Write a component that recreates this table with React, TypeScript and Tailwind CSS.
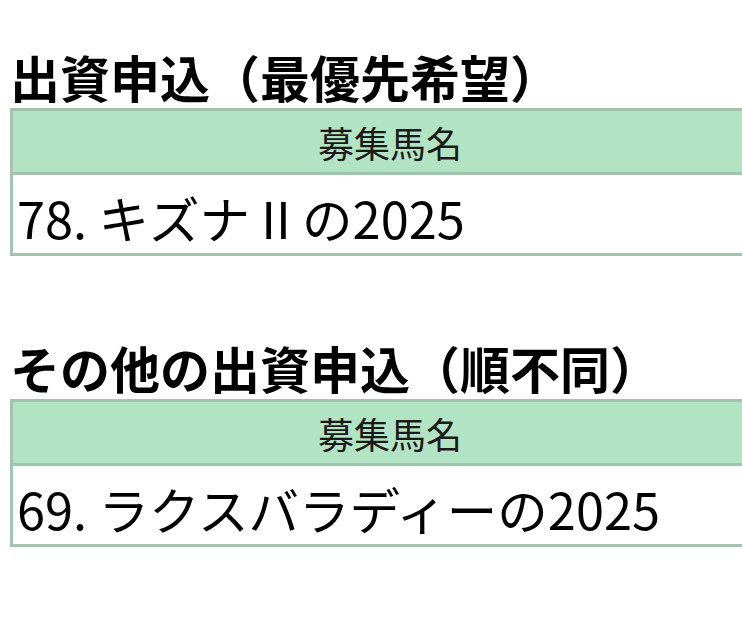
import React from "react";

const FONT = { fontFamily: '"Noto Sans CJK JP", "Noto Sans", sans-serif' };

function Section({ title, horse }: { title: string; horse: string }) {
  return (
    <section>
      <h2 className="text-[50px] leading-[50px] font-bold text-black">{title}</h2>
      <div className="mt-[7px] w-[760px] border-[3px] border-[#a4c3af]">
        <div className="h-[64px] bg-[#b2e3c3] flex items-center justify-center text-[36px] text-[#1a1a1a] border-b-[3px] border-[#a4c3af]">
          募集馬名
        </div>
        <div className="h-[78px] bg-white flex items-center pl-[4px] pt-[7px] text-[50.5px] text-black whitespace-nowrap">
          {horse}
        </div>
      </div>
    </section>
  );
}

export default function App() {
  return (
    <div className="w-[742px] h-[643px] overflow-hidden bg-white" style={FONT}>
      <div className="pl-[10px] pt-[51px] flex flex-col gap-[86px]">
        <Section title="出資申込（最優先希望）" horse="78. キズナ II の2025" />
        <Section title="その他の出資申込（順不同）" horse="69. ラクスバラディーの2025" />
      </div>
    </div>
  );
}
